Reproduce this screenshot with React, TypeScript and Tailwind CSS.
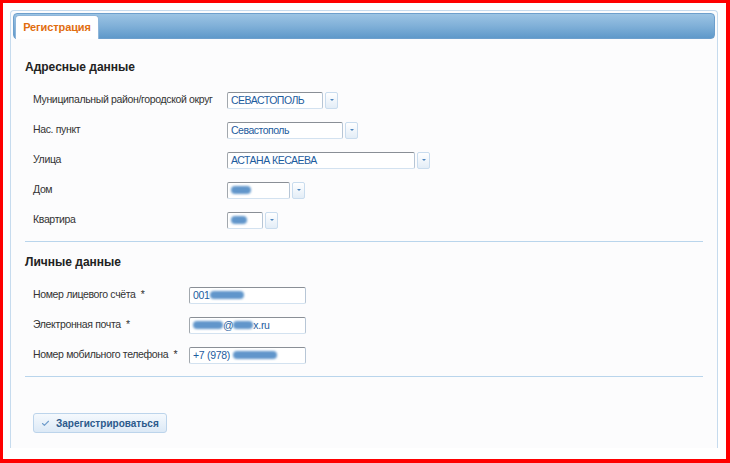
import { Check } from 'lucide-react';

type Row = { label: string; width: string; value: React.ReactNode };

function Blob({ w }: { w: string }) {
  return <span className={`inline-block h-[8px] ${w} rounded-full bg-[#6196cb] blur-[1px] align-middle`} />;
}

function Select({ width, children }: { width: string; children: React.ReactNode }) {
  return (
    <div className="flex items-stretch gap-[2px] h-[17px]">
      <div
        className={`${width} flex items-center px-[3px] bg-white border border-[#b7c6d6] border-t-[#8a8f96] border-l-[#a2a8ae] border-b-[#d3e2f0] rounded-[2px] text-[10.5px] tracking-[-0.5px] text-[#1d5c9e] leading-none whitespace-nowrap overflow-hidden`}
      >
        {children}
      </div>
      <div className="w-[13px] flex items-center justify-center rounded-[2px] border border-[#c9dcee] bg-gradient-to-b from-white to-[#e3edf7]">
        <span className="block w-0 h-0 border-l-[2px] border-r-[2px] border-t-[2px] border-l-transparent border-r-transparent border-t-[#4f86bf]" />
      </div>
    </div>
  );
}

function Input({ children }: { children: React.ReactNode }) {
  return (
    <div className="w-[117px] h-[17px] flex items-center px-[3px] bg-white border border-[#b7c6d6] border-t-[#8a8f96] border-l-[#a2a8ae] border-b-[#d3e2f0] rounded-[2px] text-[10.5px] tracking-[-0.3px] text-[#1d5c9e] leading-none whitespace-nowrap overflow-hidden">
      {children}
    </div>
  );
}

export default function App() {
  const address: Row[] = [
    { label: 'Муниципальный район/городской округ', width: 'w-[96px]', value: 'СЕВАСТОПОЛЬ' },
    { label: 'Нас. пункт', width: 'w-[116px]', value: 'Севастополь' },
    { label: 'Улица', width: 'w-[188px]', value: 'АСТАНА КЕСАЕВА' },
    { label: 'Дом', width: 'w-[63px]', value: <Blob w="w-[20px]" /> },
    { label: 'Квартира', width: 'w-[36px]', value: <Blob w="w-[16px]" /> },
  ];

  const personal = [
    {
      label: 'Номер лицевого счёта',
      value: (
        <>
          001
          <Blob w="w-[34px]" />
        </>
      ),
    },
    {
      label: 'Электронная почта',
      value: (
        <>
          <Blob w="w-[30px]" />
          @<Blob w="w-[20px]" />
          x.ru
        </>
      ),
    },
    {
      label: 'Номер мобильного телефона',
      value: (
        <>
          +7 (978)&nbsp;
          <Blob w="w-[44px]" />
        </>
      ),
    },
  ];

  return (
    <div className="w-[730px] h-[463px] bg-white border-t-[3px] border-l-[3px] border-r-[4px] border-b-[4px] border-[#ff0000] pt-[7px] pl-[7px] font-['Liberation_Sans',Arial,sans-serif]">
      <div className="w-[708px] h-[438px] flex flex-col bg-[#fcfcfd] border border-b-0 border-[#c6dbee] rounded-t-[4px] p-[2px] pb-0">
        {/* tab strip */}
        <div className="h-[26px] flex items-end pl-[1px] rounded-[4px] border border-[#6d9fcc] bg-gradient-to-b from-[#9cc4e4] via-[#80b0d8] to-[#5f99ca]">
          <div className="h-[24px] w-[84px] flex items-center justify-center bg-white border border-b-0 border-[#8fb6da] rounded-t-[4px] -mb-px">
            <span className="text-[11px] font-bold tracking-[-0.1px] text-[#e16d0f]">Регистрация</span>
          </div>
        </div>

        <div className="px-[12px]">
          <h2 className="pt-[20px] text-[12px] font-bold leading-[16px] text-[#222]">Адресные данные</h2>
          <div className="mt-[10px] pl-[8px]">
            {address.map((r) => (
              <div key={r.label} className="h-[30px] flex items-center">
                <span className="w-[194px] text-[10.5px] tracking-[-0.35px] text-[#333]">{r.label}</span>
                <Select width={r.width}>{r.value}</Select>
              </div>
            ))}
          </div>
          <div className="mt-[6px] border-t border-[#b9d5ec]" />

          <h2 className="mt-[12px] text-[12px] font-bold leading-[16px] text-[#222]">Личные данные</h2>
          <div className="mt-[10px] pl-[8px]">
            {personal.map((r) => (
              <div key={r.label} className="h-[30px] flex items-center">
                <span className="w-[156px] text-[10.5px] tracking-[-0.35px] text-[#333]">
                  {r.label}&nbsp;&nbsp;*
                </span>
                <Input>{r.value}</Input>
              </div>
            ))}
          </div>
          <div className="mt-[6px] border-t border-[#b9d5ec]" />

          <div className="mt-[36px] pl-[8px]">
            <button className="h-[20px] w-[134px] flex items-center gap-[6px] pl-[7px] rounded-[3px] border border-[#bcd4eb] bg-gradient-to-b from-[#f5f9fd] to-[#dce9f6]">
              <Check size={9} strokeWidth={3} className="text-[#6f9dcc]" />
              <span className="text-[10px] font-bold text-[#2c5a8c]">Зарегистрироваться</span>
            </button>
          </div>
        </div>
      </div>
    </div>
  );
}
